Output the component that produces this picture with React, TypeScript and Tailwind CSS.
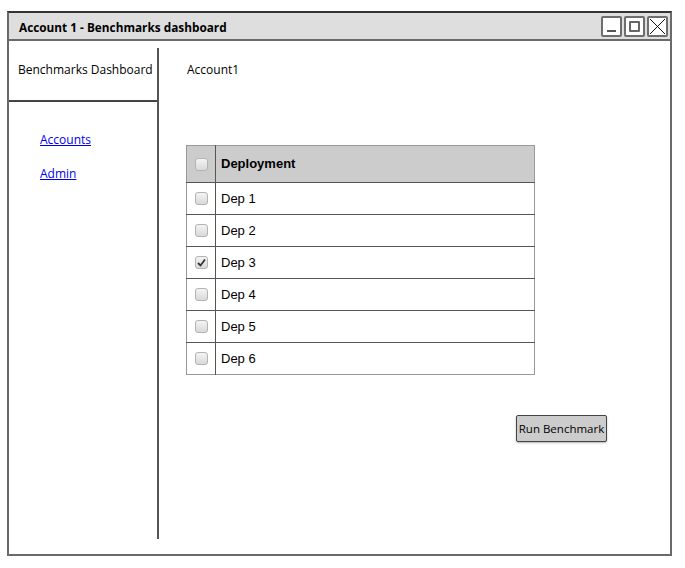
import React from "react";

const sketch = { fontFamily: '"Comic Sans MS", "Open Sans", "Noto Sans", sans-serif' };
const arial = { fontFamily: '"Liberation Sans", Arial, sans-serif' };

const rows = [
  { name: "Dep 1", checked: false },
  { name: "Dep 2", checked: false },
  { name: "Dep 3", checked: true },
  { name: "Dep 4", checked: false },
  { name: "Dep 5", checked: false },
  { name: "Dep 6", checked: false },
];

function Box({ checked }: { checked?: boolean }) {
  return (
    <span className="flex h-[13px] w-[13px] items-center justify-center rounded-[3px] border border-[#b4b4b4] bg-gradient-to-b from-[#f4f4f4] to-[#d9d9d9]">
      {checked && (
        <svg width="9" height="9" viewBox="0 0 9 9">
          <path d="M1 5 L3.5 7.5 L8 1.5" fill="none" stroke="#333" strokeWidth="1.8" />
        </svg>
      )}
    </span>
  );
}

function WinButton({ children }: { children: React.ReactNode }) {
  return (
    <div className="flex h-[21px] w-[21px] items-center justify-center rounded-[2px] border-2 border-[#6e6e6e] bg-white">
      {children}
    </div>
  );
}

export default function App() {
  return (
    <div className="h-[568px] w-[685px] bg-white pl-[7px] pt-[11px]" style={sketch}>
      <div className="flex h-[545px] w-[665px] flex-col border-2 border-[#6a6a6a] border-t-[#333]">
        <div className="flex h-[28px] items-center justify-between border-b-2 border-[#6a6a6a] bg-[#dedede] pl-[10px] pr-[2px]">
          <span className="pt-[3px] text-[11.8px] font-bold text-black">Account 1 - Benchmarks dashboard</span>
          <div className="flex gap-[2px]">
            <WinButton>
              <span className="mt-[10px] h-[2px] w-[9px] bg-[#555]" />
            </WinButton>
            <WinButton>
              <span className="h-[11px] w-[11px] rounded-[1px] border-2 border-[#666]" />
            </WinButton>
            <WinButton>
              <svg width="17" height="17" viewBox="0 0 17 17">
                <path d="M1 1 L16 16 M16 1 L1 16" stroke="#111" strokeWidth="1" />
              </svg>
            </WinButton>
          </div>
        </div>

        <div className="flex flex-1">
          <div className="flex w-[148px] flex-col">
            <div className="h-[61px] border-b-2 border-[#444] pl-[9px] pt-[20px] text-[12px] text-black">
              Benchmarks Dashboard
            </div>
            <div className="flex flex-col gap-[16px] pl-[31px] pt-[29px] text-[12px]">
              <a href="#" className="text-[#0000ee] underline">Accounts</a>
              <a href="#" className="text-[#0000ee] underline">Admin</a>
            </div>
          </div>
          <div className="mb-[15px] mt-[7px] w-[2px] bg-[#555]" />

          <div className="flex flex-1 flex-col pl-[27px] pt-[20px]">
            <div className="pl-[1px] text-[12px] text-black">Account1</div>

            <table className="mt-[66px] w-[349px] border-collapse border border-[#999] text-[13px] text-black" style={arial}>
              <thead>
                <tr className="h-[37px] bg-[#cccccc]">
                  <th className="w-[29px] border-r border-[#555] px-0">
                    <div className="flex justify-center"><Box /></div>
                  </th>
                  <th className="pl-[5px] text-left font-bold">Deployment</th>
                </tr>
              </thead>
              <tbody>
                {rows.map((r) => (
                  <tr key={r.name} className="h-[32px] border-t border-[#555]">
                    <td className="border-r border-[#555] px-0">
                      <div className="flex justify-center"><Box checked={r.checked} /></div>
                    </td>
                    <td className="pl-[5px]">{r.name}</td>
                  </tr>
                ))}
              </tbody>
            </table>

            <div className="mt-[40px] flex w-[421px] justify-end">
              <button className="h-[27px] w-[91px] rounded-[2px] border border-[#444] bg-[#cccccc] px-0 text-[11.5px] text-black shadow-[0_1px_2px_rgba(0,0,0,0.3)]">
                Run Benchmark
              </button>
            </div>
          </div>
        </div>
      </div>
    </div>
  );
}
